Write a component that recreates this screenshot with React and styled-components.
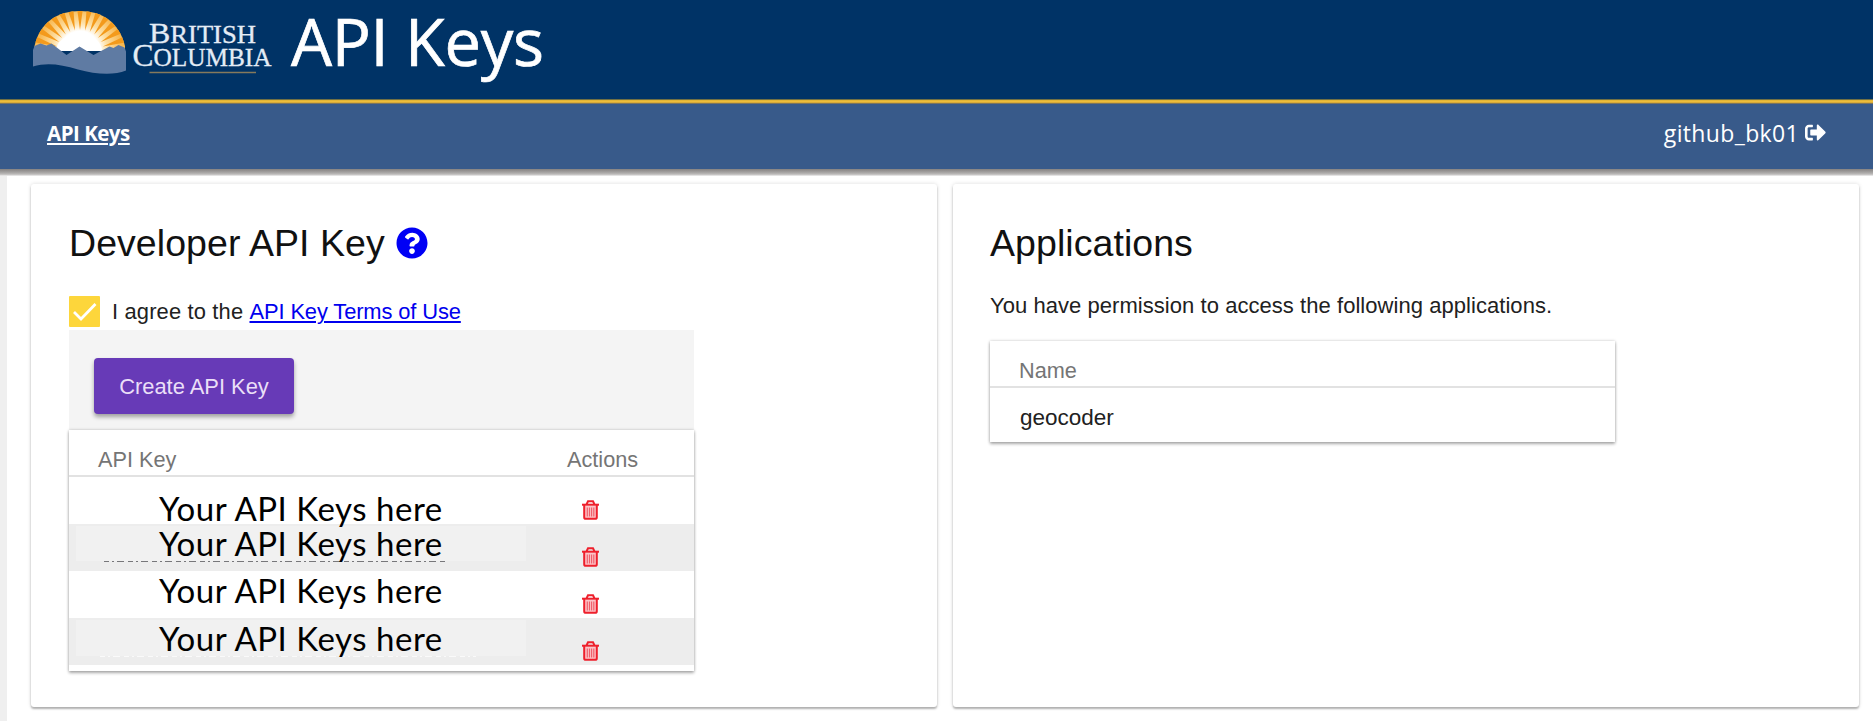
import React from 'react';
import styled, { createGlobalStyle } from 'styled-components';
import { FaQuestionCircle, FaSignOutAlt } from 'react-icons/fa';

const GlobalStyle = createGlobalStyle`
  * { box-sizing: border-box; }
  html, body { margin: 0; padding: 0; }
  body {
    background: #fff;
    color: #212121;
    font-family: 'Liberation Sans', Arial, sans-serif;
    overflow: hidden;
  }
`;

const Page = styled.div`
  display: flex;
  flex-direction: column;
  height: 721px;
`;

const Header = styled.header`
  display: flex;
  flex: none;
  height: 99px;
  padding-left: 28px;
  background: #003366;
`;

const GoldRule = styled.div`
  flex: none;
  height: 5px;
  background: linear-gradient(#6f6f44 0 1px, #e3b535 1px 2px, #edbd3c 2px 3px, #d9ab38 3px 4px, #7b745c 4px);
`;

const Logo = styled.svg`
  display: block;
  flex: none;
  width: 250px;
  height: 84px;
`;

const SiteTitle = styled.h1`
  margin: 0 0 0 13px;
  color: #fff;
  font: 400 65px/83px 'Open Sans', sans-serif;
  letter-spacing: -0.3px;
  white-space: nowrap;
  -webkit-text-stroke: 0.7px #fff;
`;

const NavBar = styled.nav`
  position: relative;
  z-index: 1;
  display: flex;
  flex: none;
  align-items: center;
  justify-content: space-between;
  height: 65px;
  padding: 0 47px 8px;
  background: #385a8a;
  font-family: 'Open Sans', sans-serif;
  color: #fff;
`;

const NavShadow = styled.div`
  flex: none;
  height: 7px;
  background: linear-gradient(#858281, #a3a1a0 45%, #bdbbba 75%, #f2f2f2);
`;

const NavLink = styled.a`
  color: #fff;
  font-size: 20.5px;
  line-height: 28px;
  font-weight: 700;
  letter-spacing: -0.5px;
  text-decoration: underline;
  text-decoration-thickness: 1.5px;
  text-underline-offset: 2px;
`;

const Account = styled.div`
  display: flex;
  align-items: center;
  gap: 6px;
  font-size: 23px;
  line-height: 28px;
  letter-spacing: 0.35px;
`;

const Content = styled.main`
  display: grid;
  grid-template-columns: 1fr 1fr;
  flex: 1;
  gap: 16px;
  padding: 8px 14px 14px 24px;
  border-left: 7px solid #efefef;
`;

const Card = styled.section`
  height: 523px;
  padding: 36px 38px 0 ${(p) => p.$inset}px;
  border-radius: 3px;
  background: #fff;
  box-shadow: 0 2px 2px rgba(0, 0, 0, 0.27), 0 0 4px rgba(0, 0, 0, 0.14);
`;

const CardTitle = styled.h2`
  display: flex;
  align-items: center;
  gap: 11px;
  margin: 0;
  height: 46px;
  font-size: 37.5px;
  line-height: 46px;
  font-weight: 400;
  letter-spacing: 0.06px;
  color: #111;
  white-space: nowrap;
`;

const HelpIcon = styled(FaQuestionCircle)`
  width: 32px;
  height: 32px;
  color: #0000f5;
`;

const Agreement = styled.label`
  display: flex;
  align-items: center;
  height: 31px;
  margin-top: 30px;
  font-size: 21.9px;
  line-height: 31px;
  letter-spacing: 0.16px;
  white-space: pre;
  a {
    color: #0000ee;
    letter-spacing: -0.12px;
    text-decoration-thickness: 1.5px;
    text-underline-offset: 2px;
  }
`;

const CheckBox = styled.svg`
  width: 31px;
  height: 31px;
  margin-right: 12px;
  background: #fdd63b;
  border-radius: 1px;
`;

const Paragraph = styled.p`
  margin: 27px 0 0;
  font-size: 22px;
  line-height: 26px;
  letter-spacing: 0.05px;
  white-space: nowrap;
`;

const Toolbar = styled.div`
  width: 625px;
  height: 100px;
  margin-top: 3px;
  padding: 28px 25px;
  background: #f4f4f4;
`;

const PrimaryButton = styled.button`
  display: block;
  width: 200px;
  height: 56px;
  padding: 0;
  border: 0;
  border-radius: 4px;
  background: #673ab7;
  color: #eadff7;
  font: 400 21.9px/57px 'Liberation Sans', sans-serif;
  box-shadow: 0 3px 4px rgba(0, 0, 0, 0.35);
`;

const Table = styled.div`
  width: 625px;
  height: ${(p) => p.$height}px;
  margin-top: ${(p) => p.$top || 0}px;
  background: #fff;
  box-shadow: 0 2px 3px rgba(0, 0, 0, 0.3), 0 0 3px rgba(0, 0, 0, 0.2);
`;

const HeadRow = styled.div`
  display: flex;
  height: 47px;
  padding: 17px 0 0 29px;
  border-bottom: 2px solid #e2e2e2;
  color: #757575;
  font-size: 21.7px;
  line-height: 26px;
`;

const HeadCell = styled.div`
  width: ${(p) => p.$width}px;
`;

const BodyRow = styled.div`
  display: flex;
  height: 47px;
  background: ${(p) => (p.$striped ? '#ededed' : 'transparent')};
`;

const AppRow = styled.div`
  padding-left: 30px;
  font-size: 22.5px;
  line-height: 60px;
`;

const KeyCell = styled.div`
  display: flex;
  flex-direction: column;
  width: 457px;
  padding: 2px 0 0 7px;
`;

const KeyField = styled.div`
  height: ${(p) => p.$height}px;
  padding: ${(p) => p.$top}px 0 0 83px;
  background: ${(p) => (p.$shaded ? '#f1f1f1' : 'transparent')};
`;

const KeyText = styled.div`
  position: relative;
  z-index: 1;
  color: #000;
  font: 400 33px/30px Lato, sans-serif;
  letter-spacing: 0.53px;
  white-space: nowrap;
`;

const Residue = styled.div`
  height: 1px;
  width: ${(p) => p.$width}px;
  margin-left: ${(p) => p.$left}px;
  background: repeating-linear-gradient(
    90deg, ${(p) => p.$color} 0 5px, transparent 5px 8px, ${(p) => p.$color} 8px 10px,
    transparent 10px 13px, ${(p) => p.$color} 13px 20px, transparent 20px 24px);
`;

const ActionCell = styled.div`
  padding: 23px 0 0 56px;
`;

const Trash = () => (
  <svg width="17" height="20" viewBox="0 0 17 20" fill="none" stroke="#ee202c">
    <path d="M2.500 5.500h12v13h-12z" fill="#fcc4c8" stroke="none" />
    <path d="M0 4.700h17" strokeWidth="2" />
    <path d="M4.600 4.200L6 1.300h5L12.400 4.200" strokeWidth="2" />
    <path d="M2.200 5v12.200q0 1.600 1.700 1.600h9.200q1.700 0 1.700-1.600V5" strokeWidth="2" />
    <path d="M5.300 7.500v9M7.500 7.500v9M9.600 7.500v9M11.800 7.500v9" stroke="#f0606c" strokeWidth="1.200" />
  </svg>
);

const RAYS = [-72, -60, -48, -36, -24, -12, 0, 12, 24, 36, 48, 60, 72];

const BrandLogo = () => (
  <Logo viewBox="28 0 250 84">
    <defs>
      <clipPath id="sun"><path d="M34.500 46C40 22 58 11 80 11s39 11 45 35v5H34.500z" /></clipPath>
      <radialGradient id="glow" cx="80" cy="50" r="42" gradientUnits="userSpaceOnUse">
        <stop offset=".45" stopColor="#fff" />
        <stop offset=".65" stopColor="#fde0a6" />
        <stop offset="1" stopColor="#f8b850" />
      </radialGradient>
    </defs>
    <g clipPath="url(#sun)">
      <path d="M30 5h100v60H30z" fill="url(#glow)" />
      {RAYS.map((a) => (
        <path key={a} d="M80 30L76.500 4h7z" fill="#f39a1c" transform={`rotate(${a} 80 54)`} />
      ))}
      <ellipse cx="79" cy="51" rx="23" ry="17" fill="#fff" />
    </g>
    <path d="M33 50l1.500-4 6-2.500 6 2 5-2 15 11.500 13-8.500 14 8.500 16-8.500 4 1.500 5-3 6 2.500 1.500 4v19c-12 5-30 4-48-1-17-5-31-7-45-3z" fill="#5f7ba3" />
    <g fill="#e4ecf5" fontFamily="'Liberation Serif', serif" stroke="#e4ecf5" strokeWidth=".3">
      <text x="149" y="42.500" fontSize="30" textLength="107" lengthAdjust="spacingAndGlyphs">B<tspan fontSize="25">RITISH</tspan></text>
      <text x="132.500" y="66" fontSize="31" textLength="139" lengthAdjust="spacingAndGlyphs">C<tspan fontSize="25">OLUMBIA</tspan></text>
    </g>
    <path d="M149.500 72.500H256" stroke="#857a5c" strokeWidth="1.400" />
  </Logo>
);

const KEYS = [
  { field: 45, top: 14 },
  { field: 35, top: 2, shaded: true, residue: { $left: 28, $width: 342, $color: '#77777a' } },
  { field: 45, top: 2 },
  { field: 36, top: 3, shaded: true, residue: { $left: 24, $width: 376, $color: '#fafafa' } },
];

export default function App() {
  return (
    <Page>
      <GlobalStyle />
      <Header>
        <BrandLogo />
        <SiteTitle>API Keys</SiteTitle>
      </Header>
      <GoldRule />
      <NavBar>
        <NavLink>API Keys</NavLink>
        <Account>github_bk01 <FaSignOutAlt size={21} /></Account>
      </NavBar>
      <NavShadow />
      <Content>
        <Card $inset={38}>
          <CardTitle>Developer API Key <HelpIcon /></CardTitle>
          <Agreement>
            <CheckBox viewBox="0 0 31 31" fill="none" stroke="#fff" strokeWidth="2.800">
              <path d="M5 16l7 7L26.500 8" />
            </CheckBox>
            I agree to the <a href="#terms">API Key Terms of Use</a>
          </Agreement>
          <Toolbar><PrimaryButton>Create API Key</PrimaryButton></Toolbar>
          <Table $height={241}>
            <HeadRow>
              <HeadCell $width={469}>API Key</HeadCell>
              <HeadCell $width={100}>Actions</HeadCell>
            </HeadRow>
            {KEYS.map((k, i) => (
              <BodyRow key={i} $striped={k.shaded}>
                <KeyCell>
                  <KeyField $height={k.field} $top={k.top} $shaded={k.shaded}>
                    <KeyText>Your API Keys here</KeyText>
                  </KeyField>
                  {k.residue && <Residue {...k.residue} />}
                </KeyCell>
                <ActionCell><Trash /></ActionCell>
              </BodyRow>
            ))}
          </Table>
        </Card>
        <Card $inset={37}>
          <CardTitle>Applications</CardTitle>
          <Paragraph>You have permission to access the following applications.</Paragraph>
          <Table $height={101} $top={22}>
            <HeadRow><HeadCell $width={200}>Name</HeadCell></HeadRow>
            <AppRow>geocoder</AppRow>
          </Table>
        </Card>
      </Content>
    </Page>
  );
}
